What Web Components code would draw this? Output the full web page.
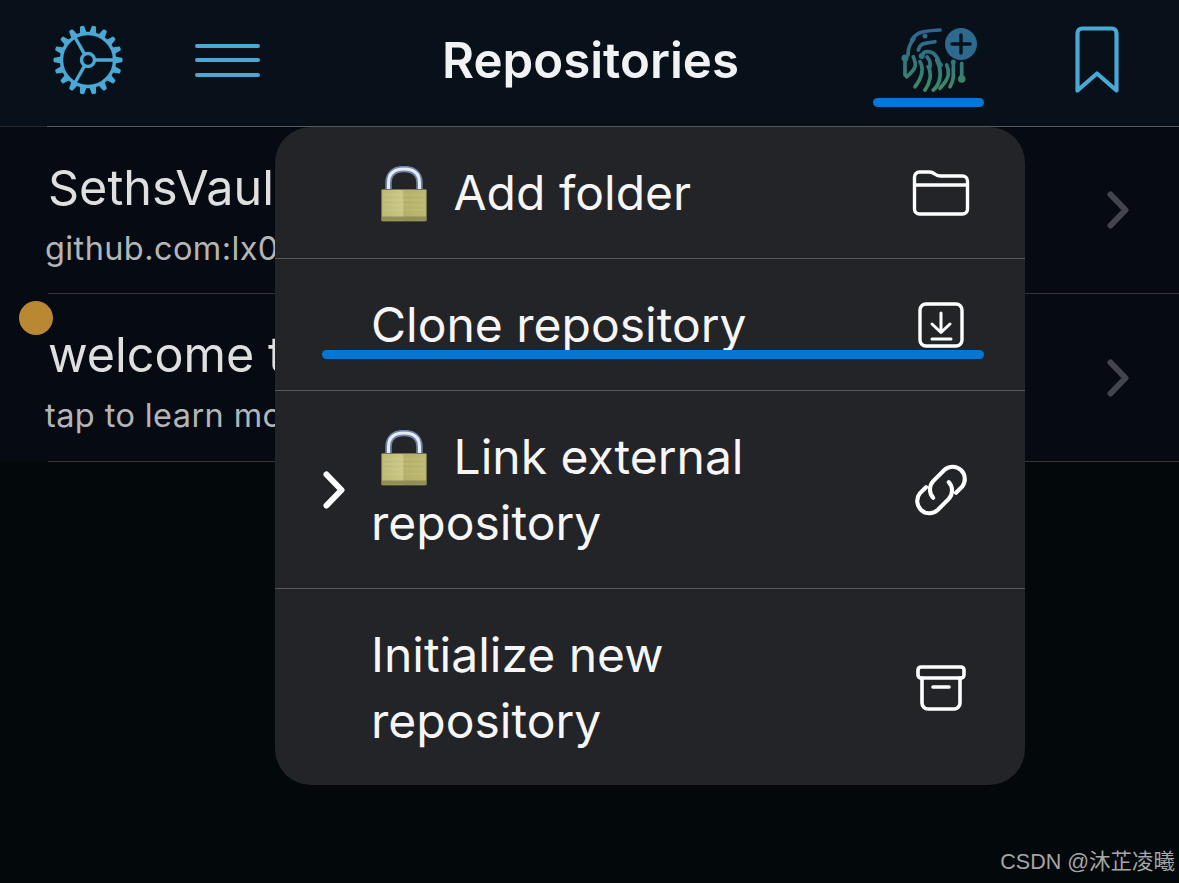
<!DOCTYPE html>
<html><head><meta charset="utf-8">
<style>
html,body{margin:0;padding:0;background:#03080b;}
body{width:1179px;height:883px;overflow:hidden;font-family:Inter,"Noto Sans CJK SC",sans-serif;}
</style></head><body>
<repo-app></repo-app>
<template id="lock"><svg viewBox="0 0 46 56" width="46" height="56" style="display:block"><defs>
<linearGradient id="br" x1="0" x2="1" y1="0" y2="0"><stop offset="0" stop-color="#bbb874"/><stop offset=".46" stop-color="#cbc888"/><stop offset=".5" stop-color="#b5b16a"/><stop offset="1" stop-color="#bbb770"/></linearGradient>
</defs>
<path d="M7.500 24V17C7.500 7 14 3 23 3S38.500 7 38.500 17V24" fill="none" stroke="#6f84a6" stroke-width="6.500"/>
<path d="M7.500 24V17C7.500 7 14 3 23 3S38.500 7 38.500 17V24" fill="none" stroke="#e6ecf4" stroke-width="3"/>
<rect x=".5" y="23.500" width="45" height="31.500" rx="1" fill="url(#br)" stroke="#77754e" stroke-width="1"/>
<rect x="1" y="50.500" width="44" height="4" fill="#918e56"/>
<g stroke="#d8d5a6" stroke-opacity=".35" stroke-width="1"><path d="M2 29H44M2 34H44M2 39H44M2 44H44"/></g>
</svg></template>
<script>
const lockSvg = document.getElementById('lock').innerHTML;
const ic = {
 folder:`<svg width="58" height="46" viewBox="0 0 58 46" fill="none" stroke="#fff" stroke-width="3.400" stroke-linejoin="round"><path d="M2.500 14V7a5 5 0 0 1 5-5h10c3 0 4 1 6 2.500S26 6 29 6h21.500a5 5 0 0 1 5 5v28a5 5 0 0 1-5 5H7.500a5 5 0 0 1-5-5z"/><path d="M2.500 15H55.500"/></svg>`,
 down:`<svg width="46" height="46" viewBox="0 0 46 46" fill="none" stroke="#fff" stroke-linecap="round" stroke-linejoin="round"><rect x="2" y="2" width="42" height="42" rx="6" stroke-width="3.400"/><path d="M23 11V30M14 22L23 30.500 32 22M14 37H33" stroke-width="3"/></svg>`,
 link:`<svg width="60" height="60" viewBox="0 0 54 54" fill="none" stroke="#fff" stroke-width="3.700" stroke-linecap="round"><path d="M40.500 29.500L46 24A11 11 0 0 0 30 9L20 19A11 11 0 0 0 20 34"/><path d="M13.500 24.500L8 30A11 11 0 0 0 24 45L34 35A11 11 0 0 0 34 20"/></svg>`,
 box:`<svg width="50" height="46" viewBox="0 0 50 46" fill="none" stroke="#fff" stroke-width="3.600" stroke-linecap="round" stroke-linejoin="round"><rect x="2" y="2" width="46" height="11" rx="3"/><path d="M6 13V38a6 6 0 0 0 6 6H38a6 6 0 0 0 6-6V13"/><path d="M17 22H33"/></svg>`
};
function shell(el, css, html){ el.attachShadow({mode:'open'}).innerHTML = `<style>${css}</style>${html}`; }

class GearIcon extends HTMLElement{ connectedCallback(){
  let teeth='';
  for(let i=0;i<18;i++){ teeth+=`<path d="M31.500 8L32.800 1.300Q33 .5 34 .5H36Q37 .5 37.200 1.300L38.500 8z" transform="rotate(${i*20+10} 35 35)"/>`; }
  shell(this,':host{display:block;width:70px;height:70px;color:#4aa8d4}svg{display:block}',
  `<svg width="70" height="70" viewBox="0 0 70 70"><g fill="currentColor">${teeth}</g><g fill="none" stroke="currentColor" stroke-width="3.400"><circle cx="35" cy="35" r="26.500"/><circle cx="35" cy="35" r="6.500"/><path d="M41.500 35H61M31.700 29.300L21.500 11.500M31.700 40.700L21.500 58.500"/></g></svg>`);
}}
class MenuIcon extends HTMLElement{ connectedCallback(){
  shell(this,':host{display:flex;flex-direction:column;gap:10.500px;width:65px}i{display:block;height:4px;border-radius:2px;background:#4aa8d4}','<i></i><i></i><i></i>');
}}
class PrintIcon extends HTMLElement{ connectedCallback(){
  shell(this,':host{display:block;width:80px;height:70px}svg{display:block}.s{filter:blur(.4px)}',
  `<svg width="80" height="70" viewBox="0 0 80 70" fill="none"><defs><linearGradient id="fp" gradientUnits="userSpaceOnUse" x1="0" y1="5" x2="0" y2="65"><stop offset="0" stop-color="#2f6590"/><stop offset=".45" stop-color="#2f7480"/><stop offset="1" stop-color="#3f8a66"/></linearGradient></defs>
  <g class="s"><g stroke="url(#fp)" stroke-width="3.700" stroke-linecap="round" stroke-linejoin="round">
  <path d="M13.700 15Q18 8 25.300 6.700T42 5"/>
  <path d="M10 30Q10 20 16 14"/>
  <path d="M20.300 25Q22 19 27 18.300T37 16.700"/>
  <path d="M23.700 31.700Q25 27 28.700 26.700T35.300 28.300Q40 32 42 40"/>
  <path d="M29 32Q33 36 32 42"/>
  <path d="M7 33V50"/>
  <path d="M15.300 31.700Q18 38 17 41.700T8.700 51.700"/>
  <path d="M22 36.700Q25 42 23.700 48.300T17 61.700"/>
  <path d="M30.300 41.700Q33 47 32 53.300T27 65"/>
  <path d="M38.700 35Q43 43 42 51.700T35.300 65"/>
  <path d="M48.700 40Q51 45 50.300 50T42 63.300"/>
  <path d="M55.300 38.300V51.700Q55 57 52 61.700"/>
  <path d="M63.700 38.300V54.300"/>
  </g>
  <g fill="url(#fp)"><circle cx="7" cy="33" r="3.500"/><circle cx="63.700" cy="54" r="3.800"/><circle cx="27" cy="11" r="2.500"/><circle cx="23.700" cy="31" r="3"/><circle cx="42" cy="40" r="2.800"/><circle cx="55.300" cy="37" r="2.500"/></g></g>
  <circle cx="63" cy="19" r="16" fill="#2d6a8e"/><path d="M54 19H72M63 10V28" stroke="#06121c" stroke-width="3.400" stroke-linecap="round"/></svg>`);
}}
class BookmarkIcon extends HTMLElement{ connectedCallback(){
  shell(this,':host{display:block;width:44px;height:68px}svg{display:block}',
  `<svg width="44" height="68" viewBox="0 0 44 68" fill="none" stroke="#4aa8d4" stroke-width="4.200" stroke-linejoin="round"><path d="M2.500 7a4.500 4.500 0 0 1 4.500-4.500H37A4.500 4.500 0 0 1 41.500 7V64.500L22 47.500 2.500 64.500z"/></svg>`);
}}
class AppHeader extends HTMLElement{ connectedCallback(){
  shell(this,`:host{display:block;height:126px;background:#08111a;border-bottom:1px solid #56585a;border-image:linear-gradient(90deg,#25282b 48px,#56585a 48px) 1;position:relative;box-sizing:content-box}
  .bar{display:flex;align-items:center;height:126px;padding-left:53px}
  gear-icon{margin:-6px 0 0 0}
  menu-icon{margin:-6px 0 0 72px}
  h1{font:600 49.200px/1 Inter,sans-serif;color:#f1f2f3;width:296px;margin:-4px 0 0 182px;white-space:nowrap}
  print-icon{margin:-6px 0 0 160px}
  bookmark-icon{margin:-6px 0 0 97px}
  .ul{position:absolute;left:873px;top:98px;width:111px;height:9px;border-radius:5px;background:#0277d6}`,
  `<div class="bar"><gear-icon></gear-icon><menu-icon></menu-icon><h1>Repositories</h1><print-icon></print-icon><bookmark-icon></bookmark-icon></div><div class="ul"></div>`);
}}
class RepoRow extends HTMLElement{ connectedCallback(){
  shell(this,`:host{display:flex;align-items:center;box-sizing:border-box;margin-left:48px;padding:0 50px 0 0;height:var(--h,167px);border-bottom:1px solid #33353a}
  .t{flex:1;min-width:0;white-space:nowrap;margin-top:10px}
  .a{font:400 48.500px/60px Inter,sans-serif;color:#dfdfdf;margin-left:0}
  .b{font:400 32.500px/48px Inter,sans-serif;letter-spacing:.4px;color:#b4b5b6;margin:7px 0 0 -3px}
  svg{display:block;flex:none}`,
  `<div class="t"><div class="a">${this.getAttribute('title')}</div><div class="b">${this.getAttribute('sub')}</div></div>
  <svg width="22" height="38" viewBox="0 0 22 38" fill="none" stroke="#43454c" stroke-width="6" stroke-linecap="round" stroke-linejoin="round"><path d="M3.500 3.500L18.500 19 3.500 34.500"/></svg>`);
}}
class RepoList extends HTMLElement{ connectedCallback(){
  shell(this,':host{display:block;background:#060b13}','<slot></slot>');
}}
class MenuItem extends HTMLElement{ connectedCallback(){
  const icon=ic[this.getAttribute('icon')];
  shell(this,`:host{display:flex;align-items:center;box-sizing:border-box;padding:0 54px 0 96px;border-bottom:1px solid #56585b;min-height:132px}
  :host(:last-child){border-bottom:none;padding-top:2px}
  .l{flex:1;font:400 48px/66px Inter,sans-serif;color:#f6f6f6}
  .ic{flex:none;width:60px;display:flex;justify-content:center;margin-left:20px}`,
  `<div class="l"><slot></slot></div><div class="ic">${icon}</div>`);
}}
class PopMenu extends HTMLElement{ connectedCallback(){
  shell(this,`:host{position:absolute;left:275px;top:127px;width:750px;height:658px;border-radius:36px;background:#232428;overflow:hidden;display:flex;flex-direction:column}`,'<slot></slot>');
}}
class RepoApp extends HTMLElement{ connectedCallback(){
  const L=lockSvg;
  shell(this,`:host{display:block;width:1179px;height:883px;position:relative;background:#03080b;overflow:hidden}
  .dot{position:absolute;left:19px;top:301px;width:34px;height:34px;border-radius:50%;background:#b98833}
  .ul2{position:absolute;left:322px;top:350px;width:662px;height:9px;border-radius:5px;background:#0277d6}
  .chev{position:absolute;left:323px;top:471px}
  .wm{position:absolute;right:4px;top:849px;font:21.500px/26px "Liberation Sans","Noto Sans CJK SC",sans-serif;color:#a4a6a7}
  .lk{display:inline-block;vertical-align:-12px;width:46px;height:56px;margin-right:26.500px;margin-left:10px}`,
  `<app-header></app-header>
  <repo-list>
    <repo-row title="SethsVault" sub="github.com:lx0"></repo-row>
    <repo-row title="welcome to" sub="tap to learn more" style="--h:168px"></repo-row>
  </repo-list>
  <pop-menu>
    <menu-item icon="folder" style="min-height:132px"><span class="lk">${L}</span>Add folder</menu-item>
    <menu-item icon="down" style="min-height:132px">Clone repository</menu-item>
    <menu-item icon="link" style="min-height:198px"><span class="lk">${L}</span>Link external repository</menu-item>
    <menu-item icon="box" style="min-height:196px">Initialize new repository</menu-item>
  </pop-menu>
  <div class="dot"></div><div class="ul2"></div>
  <svg class="chev" width="22" height="38" viewBox="0 0 22 38" fill="none" stroke="#fff" stroke-width="6" stroke-linecap="round" stroke-linejoin="round"><path d="M3.500 3.500L18.500 19 3.500 34.500"/></svg>
  <div class="wm">CSDN @沐芷凌曦</div>`);
}}
customElements.define('gear-icon',GearIcon);
customElements.define('menu-icon',MenuIcon);
customElements.define('print-icon',PrintIcon);
customElements.define('bookmark-icon',BookmarkIcon);
customElements.define('app-header',AppHeader);
customElements.define('repo-row',RepoRow);
customElements.define('repo-list',RepoList);
customElements.define('menu-item',MenuItem);
customElements.define('pop-menu',PopMenu);
customElements.define('repo-app',RepoApp);
</script>
</body></html>
